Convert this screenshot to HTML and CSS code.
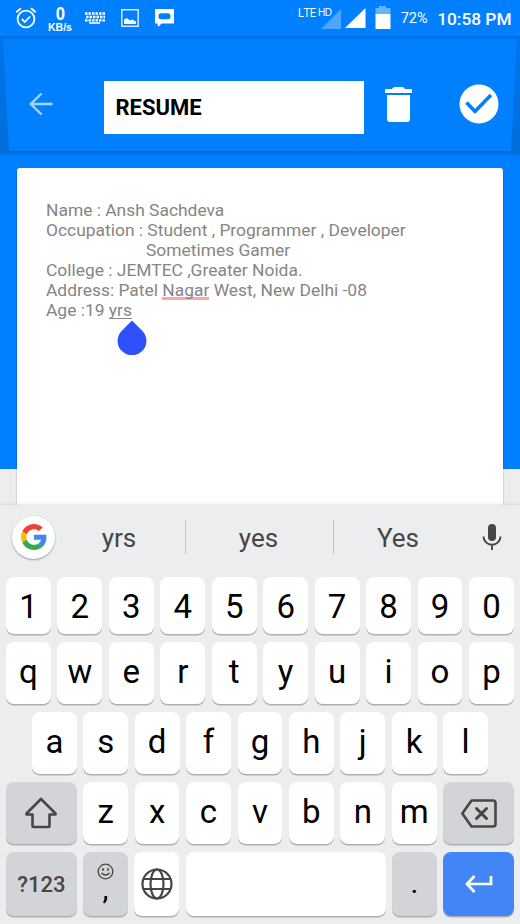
FILE: index.html
```
<!DOCTYPE html>
<html lang="en">
<head>
<meta charset="utf-8">
<title>Resume</title>
<link rel="stylesheet" href="styles.css">
</head>
<body>
<main class="phone">
  <header class="status">
    <div class="status-left">
      <svg class="alarm" width="22" height="22" viewBox="0 0 22 22" fill="none" stroke="#fff"><circle cx="11" cy="12" r="8.4" stroke-width="1.8"/><path d="M1.2 5.3 6 1.3M20.8 5.3 16 1.3M6.8 12l3 3 5.3-5.5" stroke-width="1.8"/></svg>
      <div class="speed"><b>0</b><span>KB/s</span></div>
      <svg class="kbd" width="20" height="12" viewBox="0 0 20 12" stroke="#fff" fill="none"><path d="M0 1.5h20M1 5h19M0 8.3h20" stroke-width="2.3" stroke-dasharray="2.5 1"/><path d="M4 11h11" stroke-width="1.6"/></svg>
      <svg class="photo" width="18" height="18" viewBox="0 0 18 18"><path d="M.8.8h16.4v16.4H.8z" fill="none" stroke="#d5e9ff" stroke-width="1.5"/><path d="M3 15v-4l2.500-2L7 10l2 1.500 2-1 4 2V15z" fill="#fff"/></svg>
      <svg class="chat" width="20" height="19" viewBox="0 0 20 19"><path d="M0 0h19v14.500H6.500L3 18 2.500 14.500H0z" fill="#fff"/><rect x="3.500" y="4.200" width="12" height="6" rx="2.500" fill="#0080ff"/></svg>
    </div>
    <div class="status-right">
      <span class="lte">LTE</span><span class="hd">HD</span>
      <svg class="signals" width="46" height="21" viewBox="0 0 46 21"><path d="M21 1v20H1z" fill="#4da6ff"/><path d="M45.500 0v20H25z" fill="#fff"/></svg>
      <svg class="battery" width="16" height="23" viewBox="0 0 16 23"><path d="M4 0h7v2h4.500v6H.5V2H4z" fill="#66b3ff"/><path d="M.5 8h15v15H.5z" fill="#fff"/></svg>
      <span class="percent">72%</span>
      <span class="clock">10:58 PM</span>
    </div>
  </header>

  <section class="toolbar">
    <div class="toolbar-face">
      <svg class="back" width="24" height="24" viewBox="0 0 24 24" fill="none" stroke="#a9d4ff" stroke-width="2.400"><path d="M23.500 12H2M12.500 1.500 1.800 12l10.700 10.500"/></svg>
      <div class="title">RESUME</div>
      <svg class="trash" width="27" height="36" viewBox="0 0 27 36" fill="#fff"><path d="M0 2h7q1-2 3-2h7q2 0 3 2h7v4H0zM2 8h23v24q0 3-3 3H5q-3 0-3-3z"/></svg>
      <svg class="done" width="40" height="40" viewBox="0 0 40 40"><circle cx="20" cy="20" r="19.500" fill="#fff"/><path d="m7.500 18.500 8.500 9L32 11" fill="none" stroke="#0080ff" stroke-width="3.600"/></svg>
    </div>
  </section>

  <section class="editor">
    <article class="note"><p>Name : Ansh Sachdeva</p>
      <p>Occupation : Student , Programmer , Developer</p>
      <p class="indent">Sometimes Gamer</p>
      <p>College : JEMTEC ,Greater Noida.</p>
      <p>Address: Patel <span class="misspelled">Nagar</span> West, New Delhi -08</p>
      <p>Age :19 <span class="composing">yrs<svg class="handle" width="30" height="35" viewBox="0 0 30 35"><path d="M15 .5 25.200 10.700A14.400 14.400 0 1 1 4.800 10.700Z" fill="#304ffe"/></svg></span></p>
    </article>
  </section>

  <section class="keyboard">
    <div class="suggestions">
      <div class="google"><svg width="26" height="26" viewBox="0 0 48 48"><path fill="#ea4335" d="M24 9.500c3.540 0 6.710 1.220 9.210 3.600l6.850-6.850C35.900 2.380 30.470 0 24 0 14.620 0 6.510 5.380 2.560 13.220l7.980 6.190C12.430 13.720 17.740 9.500 24 9.500z"/><path fill="#4285f4" d="M46.980 24.550c0-1.570-.15-3.090-.38-4.550H24v9.020h12.940c-.58 2.960-2.260 5.480-4.780 7.180l7.730 6c4.510-4.180 7.090-10.360 7.090-17.650z"/><path fill="#fbbc05" d="M10.530 28.590c-.48-1.450-.76-2.990-.76-4.590s.27-3.140.76-4.590l-7.980-6.190C.92 16.460 0 20.120 0 24c0 3.880.92 7.540 2.560 10.780l7.970-6.190z"/><path fill="#34a853" d="M24 48c6.480 0 11.930-2.130 15.890-5.810l-7.730-6c-2.150 1.450-4.920 2.300-8.160 2.300-6.260 0-11.570-4.220-13.470-9.910l-7.980 6.190C6.510 42.620 14.620 48 24 48z"/></svg></div>
      <span class="word">yrs</span>
      <span class="word">yes</span>
      <span class="word">Yes</span>
      <svg class="mic" width="20" height="26" viewBox="0 0 20 26"><rect x="6" y="0" width="8" height="17" rx="4" fill="#464646"/><path d="M1.500 12.500a8.500 8.300 0 0 0 17 0M10 20.500V26" fill="none" stroke="#464646" stroke-width="1.900"/></svg>
    </div>
    <div class="row numbers"><kbd>1</kbd><kbd>2</kbd><kbd>3</kbd><kbd>4</kbd><kbd>5</kbd><kbd>6</kbd><kbd>7</kbd><kbd>8</kbd><kbd>9</kbd><kbd>0</kbd></div>
    <div class="row"><kbd>q</kbd><kbd>w</kbd><kbd>e</kbd><kbd>r</kbd><kbd>t</kbd><kbd>y</kbd><kbd>u</kbd><kbd>i</kbd><kbd>o</kbd><kbd>p</kbd></div>
    <div class="row home"><kbd>a</kbd><kbd>s</kbd><kbd>d</kbd><kbd>f</kbd><kbd>g</kbd><kbd>h</kbd><kbd>j</kbd><kbd>k</kbd><kbd>l</kbd></div>
    <div class="row">
      <kbd class="wide gray"><svg class="shift" width="34" height="32" viewBox="0 0 34 32" fill="none" stroke="#464646" stroke-width="2.600" stroke-linejoin="round"><path d="M17 2 2.500 16.500v1H8.500V29q0 1 1 1h15q1 0 1-1V17.500h6v-1z"/></svg></kbd>
      <kbd>z</kbd><kbd>x</kbd><kbd>c</kbd><kbd>v</kbd><kbd>b</kbd><kbd>n</kbd><kbd>m</kbd>
      <kbd class="wide gray"><svg class="delete" width="36" height="29" viewBox="0 0 36 29" fill="none" stroke="#464646" stroke-width="2.600" stroke-linejoin="round"><path d="M10.500 1.500H32q2.500 0 2.500 2.500v21q0 2.500-2.500 2.500H10.500L1.300 14.500z"/><path d="m15.500 9.500 10 10m0-10-10 10" stroke-linecap="round" stroke-width="3"/></svg></kbd>
    </div>
    <div class="row bottom">
      <kbd class="wide gray symbols">?123</kbd>
      <kbd class="gray comma"><svg width="17" height="17" viewBox="0 0 17 17" fill="none" stroke="#464646" stroke-width="1.300"><circle cx="8.500" cy="8.500" r="7.300"/><path d="M4.500 10q4 4 8 0"/><path d="M5 6.500h2M10 6.500h2" stroke-width="2"/></svg><span>,</span></kbd>
      <kbd><svg class="globe" width="32" height="32" viewBox="0 0 32 32" fill="none" stroke="#464646" stroke-width="2.200"><circle cx="16" cy="16" r="14.500"/><ellipse cx="16" cy="16" rx="6.500" ry="14.500"/><path d="M3 11h26M3 21h26"/></svg></kbd>
      <kbd class="space"></kbd>
      <kbd class="gray period">.</kbd>
      <kbd class="wide enter"><svg width="28" height="18" viewBox="0 0 28 18" fill="none" stroke="#fff" stroke-width="2.700"><path d="M26 1v8H2.500M9.500 1 2 9l7.500 8"/></svg></kbd>
    </div>
  </section>
</main>
</body>
</html>
```
FILE: styles.css
```
* { box-sizing: border-box; }
body { margin: 0; font-family: Roboto, sans-serif; }
svg { display: block; flex: none; }
.phone { width: 520px; height: 924px; display: flex; flex-direction: column; overflow: hidden; background: #ededed; }

.status { height: 36px; background: #0080ff; color: #fff; display: flex; justify-content: space-between; }
.status-left, .status-right { display: flex; align-items: flex-start; }
.status-left { padding-left: 15px; }
.alarm { margin-top: 7px; }
.speed { width: 26px; margin-left: 10px; display: flex; flex-direction: column; align-items: center; font-family: "Liberation Sans", sans-serif; }
.speed b { font-size: 19px; line-height: 17px; margin-top: 5px; transform: scaleX(.88); }
.speed span { font-size: 10.5px; line-height: 10px; margin-top: 0; font-weight: bold; }
.kbd { margin: 12px 0 0 12px; }
.photo { margin: 9px 0 0 16px; }
.chat { margin: 9px 0 0 16px; }
.lte { font: 12px/14px "Open Sans", sans-serif; letter-spacing: -.5px; margin-top: 6px; width: 20px; }
.hd { font: 10.5px/12px "Open Sans", sans-serif; letter-spacing: -1px; margin-top: 6px; width: 2px; white-space: nowrap; position: relative; z-index: 1; }
.signals { margin-top: 8px; }
.battery { margin: 6px 0 0 9px; }
.percent { font-size: 14.5px; line-height: 18px; margin: 10px 0 0 10px; width: 27px; }
.clock { font-size: 17.3px; line-height: 22px; font-weight: 500; margin: 8px 8.500px 0 9.500px; white-space: nowrap; }

.toolbar { height: 115px; background: linear-gradient(#006ee0, #0073e6 3px, #006fdd); }
.toolbar-face { height: 115px; background: #0080ff; clip-path: polygon(3px 3px, 517px 3px, 511px 115px, 9px 115px); display: flex; align-items: flex-start; }
.back { margin: 56px 0 0 29px; }
.title { margin: 45px 0 0 51px; width: 260px; height: 53px; background: #fff; color: #000; padding-left: 11.5px; font-size: 22px; line-height: 54px; font-weight: 700; }
.trash { margin: 51px 0 0 21px; }
.done { margin: 48px 0 0 47px; }

.editor { height: 354px; padding: 17px 17px 0; overflow: hidden; background: linear-gradient(#0066cc, #0076eb 3px, #0080ff 6px, #0080ff 318px, #ededed 318px); }
.note { height: 360px; padding: 32px 29px; background: #fff; border-radius: 3px; box-shadow: 0 1px 2px rgba(0, 0, 0, .35); color: #858585; font-size: 17.42px; line-height: 20.1px; white-space: nowrap; }
.note p { margin: 0; height: 20.1px; }
.note .indent { padding-left: 100px; }
.misspelled { display: inline-block; height: 20px; border-bottom: 3px solid #ffa3a6; }
.composing { position: relative; display: inline-block; height: 19px; border-bottom: 1px solid #858585; }
.handle { position: absolute; right: -15px; top: 20px; }

.keyboard { height: 419px; background: #ecedef; padding: 0 6px; box-shadow: 0 -1px 3px rgba(0, 0, 0, .1); position: relative; }
.suggestions { height: 64px; display: flex; align-items: center; }
.google { width: 43px; height: 43px; margin-left: 6px; border-radius: 50%; background: #fff; display: grid; place-items: center; box-shadow: 0 1px 2px rgba(0, 0, 0, .35); }
.word { height: 34px; line-height: 37px; color: #464646; font-size: 26px; text-align: center; width: 147px; border-right: 1.5px solid #c4c5c7; }
.word:nth-of-type(1) { width: 131px; padding-right: 2px; }
.word:nth-of-type(2) { width: 148px; padding-right: 2px; }
.word:nth-of-type(3) { width: 130px; padding-right: 2px; border: 0; }
.mic { margin-left: 18px; }
.row { display: flex; justify-content: space-between; height: 62px; margin: 0 0 8px; }
.suggestions + .row { margin-top: 8px; }
.row.home { padding: 0 26px; }
.row.bottom { height: 64px; margin: 0; }
.row.numbers { height: 57px; }
kbd { width: 44.8px; border-radius: 8px; background: #fff; box-shadow: 0 1.5px 0 #aeb0b3; color: #000; font-family: Roboto, sans-serif; font-size: 33px; display: flex; align-items: center; justify-content: center; padding-bottom: 4px; }
.numbers kbd { padding: 2px 0 0; }
.wide { width: 70.6px; }
.gray { background: #d3d4d8; }
.space { width: 200px; }
.symbols { font-size: 22px; font-weight: 500; color: #464646; padding-bottom: 0; }
.comma { flex-direction: column; justify-content: flex-start; padding-top: 11px; }
.comma span { line-height: 34px; font-size: 30px; margin-top: -8px; }
.period { font-size: 30px; padding-bottom: 4px; }
.shift { margin-top: 4px; }
.globe { margin-top: 4px; }
.delete { margin-top: 5px; }
.enter { background: #4285f4; padding-bottom: 0; }
```
